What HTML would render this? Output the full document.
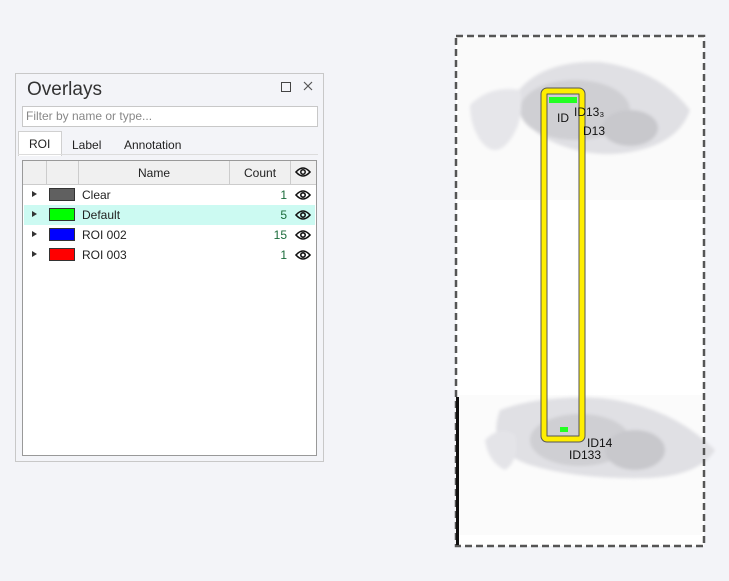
<!DOCTYPE html>
<html><head><style>
body{margin:0;width:729px;height:581px;background:#f3f4f8;position:relative;overflow:hidden;font-family:"Liberation Sans",sans-serif;}
.a{position:absolute}
.panel{left:15px;top:73px;width:307px;height:387px;border:1px solid #c8c8c8;background:#f3f4f8}
.t{font-size:13px;color:#222}
.row{position:absolute;left:24px;width:291px;height:20px;font-size:12px;color:#222}
.sw{position:absolute;left:25px;top:3px;width:26px;height:13px;border:1px solid #333;box-sizing:border-box}
.tri{position:absolute;left:8px;top:6px;width:0;height:0;border-left:5px solid #333;border-top:3.5px solid transparent;border-bottom:3.5px solid transparent}
.nm{position:absolute;left:58px;top:3px}
.ct{position:absolute;right:28px;top:3px;color:#1a6b3a}
</style></head><body>
<div class="a panel"></div>
<div class="a" style="left:27px;top:79px;font-size:19px;color:#333">Overlays</div>
<div class="a" style="left:281px;top:82px;width:8px;height:8px;border:1px solid #444"></div>
<svg class="a" style="left:303px;top:81px" width="10" height="10"><path d="M1 1L9 9M9 1L1 9" stroke="#555" stroke-width="1.2"/></svg>
<div class="a" style="left:22px;top:106px;width:291px;height:19px;border:1px solid #c8c8c8;background:#fff;font-size:12px;color:#888;line-height:19px;padding-left:3px;box-sizing:content-box">Filter by name or type...</div>
<div class="a" style="left:18px;top:131px;width:42px;height:24px;border:1px solid #d0d0d0;border-bottom:none;background:#fff"></div>
<div class="a" style="left:18px;top:154px;width:300px;height:1px;background:#dcdcdc"></div>
<div class="a t" style="left:29px;top:137px;font-size:12px">ROI</div>
<div class="a t" style="left:72px;top:138px;font-size:12px">Label</div>
<div class="a t" style="left:124px;top:138px;font-size:12px">Annotation</div>
<div class="a" style="left:22px;top:160px;width:293px;height:294px;border:1px solid #999;background:#fff"></div>
<div class="a" style="left:23px;top:161px;width:293px;height:23px;background:#f0f0f0;border-bottom:1px solid #ccc"></div>
<div class="a" style="left:46px;top:161px;width:1px;height:23px;background:#ccc"></div>
<div class="a" style="left:78px;top:161px;width:1px;height:23px;background:#ccc"></div>
<div class="a" style="left:229px;top:161px;width:1px;height:23px;background:#ccc"></div>
<div class="a" style="left:290px;top:161px;width:1px;height:23px;background:#ccc"></div>
<div class="a t" style="left:138px;top:166px;font-size:12px">Name</div>
<div class="a t" style="left:244px;top:166px;font-size:12px">Count</div>
<svg class="a" style="left:295px;top:166px" width="16" height="12" viewBox="0 0 16 12"><path d="M1 6Q8 -2 15 6Q8 14 1 6Z" fill="none" stroke="#111" stroke-width="1.6"/><circle cx="8" cy="6" r="2.2" fill="none" stroke="#111" stroke-width="1.5"/></svg>
<div class="row" style="top:185px"><div class="tri"></div><div class="sw" style="background:#606060"></div><div class="nm">Clear</div><div class="ct">1</div></div>
<div class="row" style="top:205px;background:#ccfaf2"><div class="tri"></div><div class="sw" style="background:#00ff00"></div><div class="nm">Default</div><div class="ct">5</div></div>
<div class="row" style="top:225px"><div class="tri"></div><div class="sw" style="background:#0000ff"></div><div class="nm">ROI 002</div><div class="ct">15</div></div>
<div class="row" style="top:245px"><div class="tri"></div><div class="sw" style="background:#ff0000"></div><div class="nm">ROI 003</div><div class="ct">1</div></div>
<svg class="a" style="left:295px;top:189px" width="16" height="72" viewBox="0 0 16 72"><g fill="none" stroke="#111" stroke-width="1.6"><path d="M1 6Q8 -2 15 6Q8 14 1 6Z"/><circle cx="8" cy="6" r="2.2"/><path d="M1 26Q8 18 15 26Q8 34 1 26Z"/><circle cx="8" cy="26" r="2.2"/><path d="M1 46Q8 38 15 46Q8 54 1 46Z"/><circle cx="8" cy="46" r="2.2"/><path d="M1 66Q8 58 15 66Q8 74 1 66Z"/><circle cx="8" cy="66" r="2.2"/></g></svg>

<svg class="a" style="left:0;top:0" width="729" height="581">
<defs><filter id="b"><feGaussianBlur stdDeviation="1.5"/></filter></defs>
<rect x="456" y="36" width="248" height="510" fill="#fff"/>
<rect x="458" y="38" width="244" height="162" fill="#fafafa"/>
<rect x="458" y="395" width="244" height="140" fill="#fbfbfb"/>
<g filter="url(#b)">
<path d="M515 95Q540 60 600 62Q660 70 690 110Q680 140 640 150Q600 160 560 145Q520 130 515 95Z" fill="#e0e0e4"/>
<ellipse cx="575" cy="110" rx="55" ry="30" fill="#cfcfd3"/>
<ellipse cx="630" cy="128" rx="28" ry="18" fill="#c8c8cc"/>
<path d="M470 105Q490 85 520 90Q525 120 510 140Q495 160 480 140Q470 125 470 105Z" fill="#e6e6ea"/>
<path d="M500 410Q540 395 600 398Q670 405 715 450Q700 475 650 478Q580 480 530 465Q485 450 500 410Z" fill="#e0e0e4"/>
<ellipse cx="580" cy="440" rx="50" ry="26" fill="#cfcfd3"/>
<ellipse cx="635" cy="450" rx="30" ry="20" fill="#c8c8cc"/>
<path d="M485 440Q500 425 515 435Q520 460 505 470Q488 462 485 440Z" fill="#e4e4e8"/>
</g>
<rect x="456" y="36" width="248" height="510" fill="none" stroke="#555" stroke-width="2.5" stroke-dasharray="7,4"/>
<rect x="456" y="397" width="3" height="148" fill="#111"/>
<rect x="544" y="91" width="38" height="348" rx="3" fill="none" stroke="#555" stroke-width="7"/>
<rect x="544" y="91" width="38" height="348" rx="3" fill="none" stroke="#ffee00" stroke-width="5"/>
<rect x="549" y="97" width="28" height="6" fill="#2f2"/>
<rect x="560" y="427" width="8" height="5" fill="#2f2"/>
<g font-family="Liberation Sans" font-size="12" fill="#111">
<text x="557" y="122">ID</text><text x="574" y="116">ID13₃</text><text x="583" y="135">D13</text>
<text x="587" y="447">ID14</text><text x="569" y="459">ID133</text>
</g>
</svg>
</body></html>
